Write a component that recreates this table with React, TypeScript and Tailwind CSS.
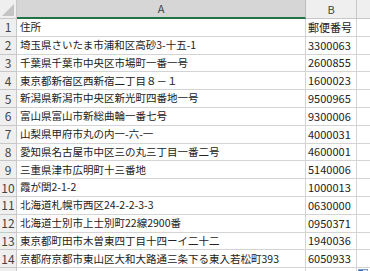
import React from 'react';

const rows: [string, string][] = [
  ['住所', '郵便番号'],
  ['埼玉県さいたま市浦和区高砂3-十五-1', '3300063'],
  ['千葉県千葉市中央区市場町一番一号', '2600855'],
  ['東京都新宿区西新宿二丁目８－１', '1600023'],
  ['新潟県新潟市中央区新光町四番地一号', '9500965'],
  ['富山県富山市新総曲輪一番七号', '9300006'],
  ['山梨県甲府市丸の内一-六-一', '4000031'],
  ['愛知県名古屋市中区三の丸三丁目一番二号', '4600001'],
  ['三重県津市広明町十三番地', '5140006'],
  ['霞が関2-1-2', '1000013'],
  ['北海道札幌市西区24-2-2-3-3', '0630000'],
  ['北海道士別市上士別町22線2900番', '0950371'],
  ['東京都町田市木曽東四丁目十四ーイ二十二', '1940036'],
  ['京都府京都市東山区大和大路通三条下る東入若松町393', '6050933'],
  ['', ''],
];

export default function App() {
  return (
    <div
      className="w-[370px] h-[271px] overflow-hidden bg-white text-[#222] select-none"
      style={{ fontFamily: '"Noto Sans CJK JP", "Noto Sans", sans-serif' }}
    >
      {/* column headers */}
      <div className="flex h-[19px] text-[11px] text-[#444]">
        <div className="w-[17px] shrink-0 bg-[#efefef] border-r border-b border-[#c8c8c8] relative overflow-hidden">
          <div className="absolute right-[2px] bottom-[2px] w-0 h-0 border-l-[12px] border-l-transparent border-b-[12px] border-b-[#c4c4c4]" />
        </div>
        <div className="w-[289px] shrink-0 bg-[#d6d6d6] border-r border-[#bdbdbd] border-b-2 border-b-[#217346] flex items-center justify-center">
          A
        </div>
        <div className="w-[51px] shrink-0 bg-[#efefef] border-r border-b border-[#c8c8c8] flex items-center justify-center">
          B
        </div>
        <div className="flex-1 bg-[#efefef] border-b border-[#c8c8c8]" />
      </div>

      {rows.map(([addr, zip], i) => (
        <div key={i} className="flex h-[17.8px] leading-none">
          <div className="w-[17px] shrink-0 bg-[#efefef] border-r border-b border-[#c8c8c8] flex items-center justify-center text-[12px] text-[#444]">
            {i + 1}
          </div>
          <div className="w-[289px] shrink-0 border-r border-b border-[#d4d4d4] flex items-center pl-[3px] whitespace-nowrap text-[10.5px]">
            {addr}
          </div>
          <div className="w-[51px] shrink-0 border-r border-b border-[#d4d4d4] flex items-center pl-[2px] whitespace-nowrap text-[11px]">
            {zip}
          </div>
          <div className="flex-1 border-b border-[#d4d4d4] relative">
            {i === 14 && (
              <div className="absolute left-[1px] top-[1px] w-[10px] h-[8px] bg-[#dfe8f3] border border-[#7a9cc6]">
                <div className="w-[4px] h-[3px] bg-[#3b6fb6]" />
              </div>
            )}
          </div>
        </div>
      ))}
    </div>
  );
}
